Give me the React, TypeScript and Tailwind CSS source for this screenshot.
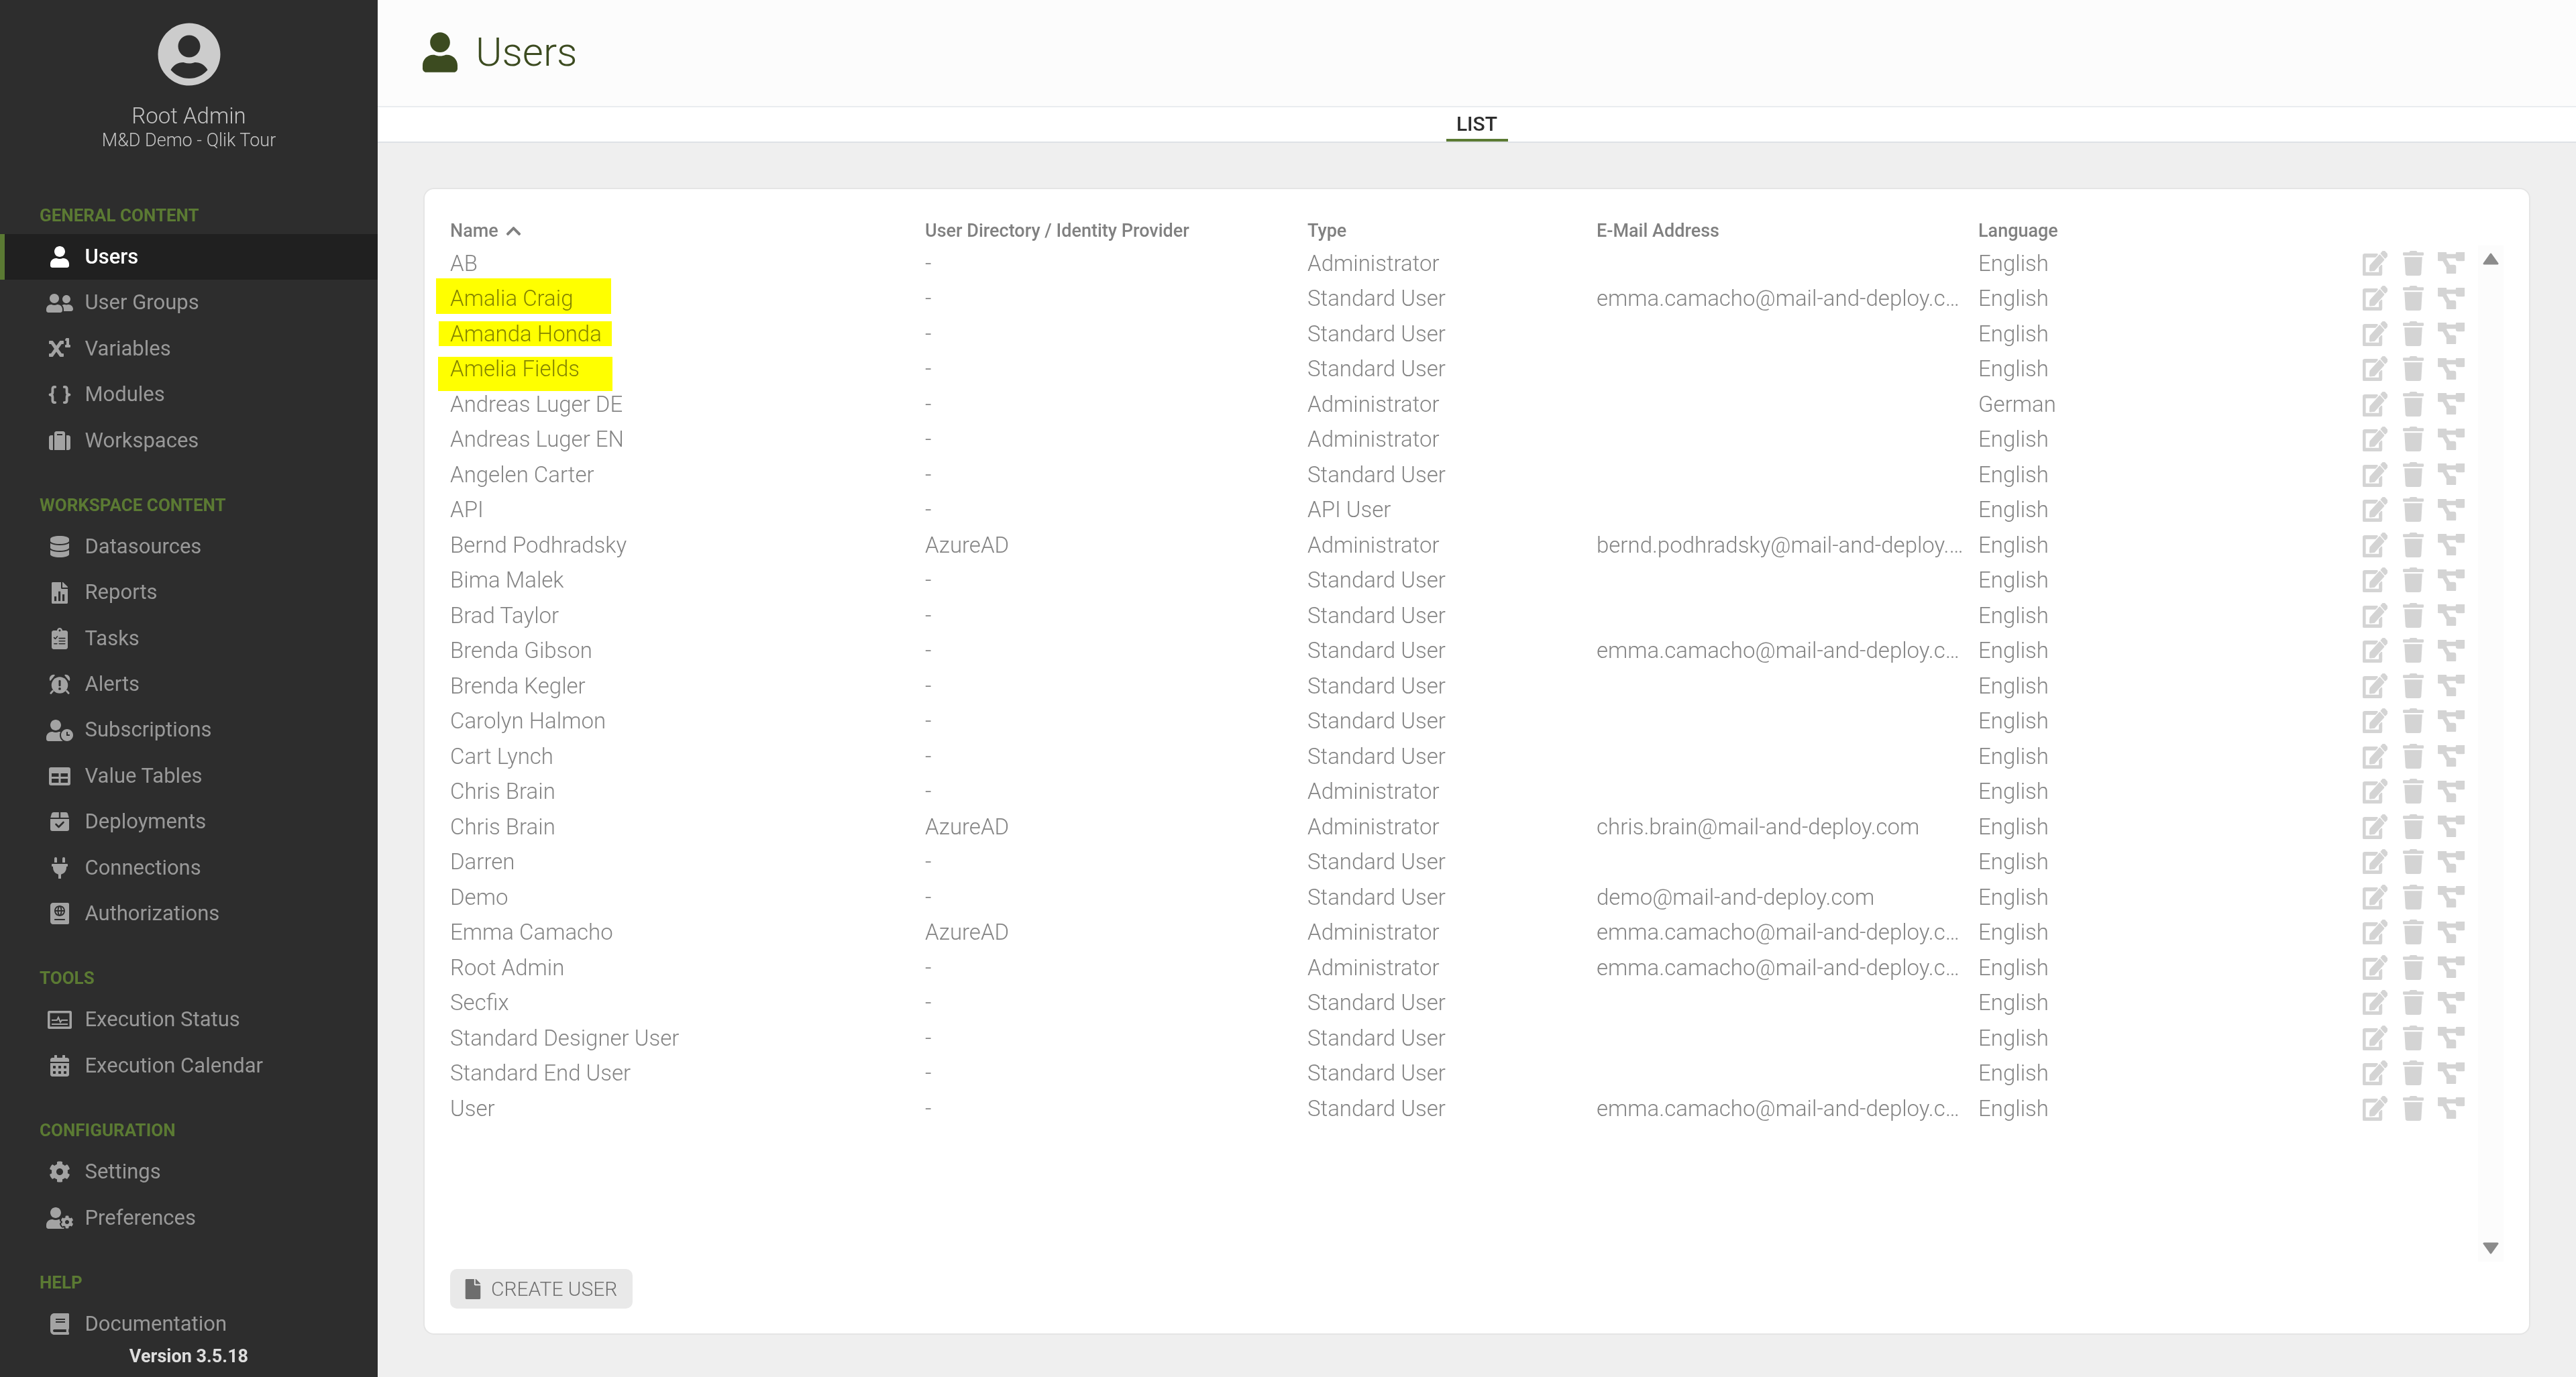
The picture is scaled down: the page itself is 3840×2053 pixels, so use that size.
import type { ReactNode } from "react";
import {
	FaBook,
	FaCalendarAlt,
	FaChevronUp,
	FaCog,
	FaDatabase,
	FaEdit,
	FaFile,
	FaPassport,
	FaPlug,
	FaProjectDiagram,
	FaSuitcase,
	FaSuperscript,
	FaTrash,
	FaUser,
	FaUserCircle,
	FaUserClock,
	FaUserCog,
	FaUserFriends
} from "react-icons/fa";

const BG = "#2d2d2d";

const BracesIcon = () => (
	<svg viewBox="0 0 36 28" className="h-[27px] w-[36px]" fill="none" stroke="currentColor" strokeWidth="4" strokeLinecap="round" strokeLinejoin="round">
		<path d="M11 2H10Q7 2 7 5V10Q7 14 3 14Q7 14 7 18V23Q7 26 10 26H11" />
		<path d="M25 2H26Q29 2 29 5V10Q29 14 33 14Q29 14 29 18V23Q29 26 26 26H25" />
	</svg>
);

const ReportIcon = () => (
	<svg viewBox="0 0 384 512" className="h-[32px] w-[24px]" fill="currentColor">
		<path d="M224 136V0H24C10.7 0 0 10.7 0 24v464c0 13.3 10.7 24 24 24h336c13.3 0 24-10.7 24-24V160H248c-13.2 0-24-10.8-24-24zm160-14.1v6.1H256V0h6.1c6.4 0 12.5 2.5 17 7l97.9 98c4.5 4.5 7 10.6 7 16.9z" />
		<rect x="64" y="340" width="50" height="110" fill={BG} />
		<rect x="160" y="220" width="50" height="230" fill={BG} />
		<rect x="256" y="290" width="50" height="160" fill={BG} />
	</svg>
);

const TasksIcon = () => (
	<svg viewBox="0 0 384 512" className="h-[32px] w-[24px]" fill="currentColor">
		<path d="M336 64h-80c0-35.3-28.7-64-64-64s-64 28.7-64 64H48C21.5 64 0 85.5 0 112v352c0 26.5 21.5 48 48 48h288c26.5 0 48-21.5 48-48V112c0-26.5-21.5-48-48-48zM192 40c13.3 0 24 10.7 24 24s-10.7 24-24 24-24-10.7-24-24 10.7-24 24-24z" />
		<g fill="none" stroke={BG} strokeWidth="26" strokeLinecap="round" strokeLinejoin="round">
			<path d="M58 235l28 28 48-56" />
			<path d="M62 380h64" />
			<path d="M180 250h136" />
			<path d="M180 380h136" />
			<path d="M180 315h136" />
		</g>
	</svg>
);

const AlarmIcon = () => (
	<svg viewBox="0 0 512 512" className="h-[32px] w-[32px]" fill="currentColor">
		<circle cx="256" cy="280" r="196" />
		<path d="M20 170C-8 110 40 20 130 30c12 2 14 12 6 20L42 168c-8 8-18 8-22 2zM492 170c28-60-20-150-110-140-12 2-14 12-6 20l94 118c8 8 18 8 22 2z" />
		<path d="M90 420l-46 52M422 420l46 52" stroke="currentColor" strokeWidth="44" strokeLinecap="round" />
		<rect x="232" y="158" width="48" height="150" rx="20" fill={BG} />
		<circle cx="256" cy="366" r="30" fill={BG} />
	</svg>
);

const TableIcon = () => (
	<svg viewBox="0 0 32 27" className="h-[27px] w-[32px]" fill="currentColor">
		<rect width="32" height="27" rx="3" />
		<rect x="4" y="9" width="10.5" height="5" fill={BG} />
		<rect x="17.5" y="9" width="10.5" height="5" fill={BG} />
		<rect x="4" y="17" width="10.5" height="6" fill={BG} />
		<rect x="17.5" y="17" width="10.5" height="6" fill={BG} />
	</svg>
);

const DeployIcon = () => (
	<svg viewBox="0 0 28 28" className="h-[28px] w-[28px]" fill="currentColor">
		<path d="M5 0H12.8V8H0.3L2 2Q2.6 0 5 0Z" />
		<path d="M15.2 0H23Q25.4 0 26 2L27.7 8H15.2Z" />
		<path d="M0 10H28V25Q28 28 25 28H3Q0 28 0 25Z" />
		<path d="M8.5 18l4 4 7-7" fill="none" stroke={BG} strokeWidth="2.6" strokeLinecap="round" strokeLinejoin="round" />
	</svg>
);

const StatusIcon = () => (
	<svg viewBox="0 0 36 27" className="h-[27px] w-[36px]" fill="currentColor">
		<rect width="36" height="27" rx="2.5" />
		<rect x="3.5" y="3.5" width="29" height="20" fill={BG} />
		<path d="M6 14h8l2-4 3 7 2-3h9" fill="none" stroke="currentColor" strokeWidth="2" />
		<rect x="6" y="19" width="24" height="2" />
	</svg>
);

const Triangle = ({ down }: { down?: boolean }) => (
	<svg viewBox="0 0 24 18" className={`h-[18px] w-[24px] ${down ? "rotate-180" : ""}`} fill="#8c8c8c" stroke="#8c8c8c" strokeWidth="3" strokeLinejoin="round">
		<path d="M12 2L22 16H2Z" />
	</svg>
);

type NavItem = { label: string; icon: ReactNode; active?: boolean };

const sections: { title: string; items: NavItem[] }[] = [
	{
		title: "GENERAL CONTENT",
		items: [
			{ label: "Users", icon: <FaUser className="h-[32px] w-[28px]" />, active: true },
			{ label: "User Groups", icon: <FaUserFriends className="h-[32px] w-[40px]" /> },
			{ label: "Variables", icon: <FaSuperscript className="h-[32px] w-[32px]" /> },
			{ label: "Modules", icon: <BracesIcon /> },
			{ label: "Workspaces", icon: <FaSuitcase className="h-[32px] w-[32px]" /> }
		]
	},
	{
		title: "WORKSPACE CONTENT",
		items: [
			{ label: "Datasources", icon: <FaDatabase className="h-[32px] w-[28px]" /> },
			{ label: "Reports", icon: <ReportIcon /> },
			{ label: "Tasks", icon: <TasksIcon /> },
			{ label: "Alerts", icon: <AlarmIcon /> },
			{ label: "Subscriptions", icon: <FaUserClock className="h-[32px] w-[40px]" /> },
			{ label: "Value Tables", icon: <TableIcon /> },
			{ label: "Deployments", icon: <DeployIcon /> },
			{ label: "Connections", icon: <FaPlug className="h-[32px] w-[24px]" /> },
			{ label: "Authorizations", icon: <FaPassport className="h-[32px] w-[28px]" /> }
		]
	},
	{
		title: "TOOLS",
		items: [
			{ label: "Execution Status", icon: <StatusIcon /> },
			{ label: "Execution Calendar", icon: <FaCalendarAlt className="h-[32px] w-[28px]" /> }
		]
	},
	{
		title: "CONFIGURATION",
		items: [
			{ label: "Settings", icon: <FaCog className="h-[32px] w-[32px]" /> },
			{ label: "Preferences", icon: <FaUserCog className="h-[32px] w-[40px]" /> }
		]
	},
	{
		title: "HELP",
		items: [{ label: "Documentation", icon: <FaBook className="h-[32px] w-[28px]" /> }]
	}
];

const EMMA = "emma.camacho@mail-and-deploy.com";

const users = [
	["AB", "-", "Administrator", "", "English"],
	["Amalia Craig", "-", "Standard User", EMMA, "English"],
	["Amanda Honda", "-", "Standard User", "", "English"],
	["Amelia Fields", "-", "Standard User", "", "English"],
	["Andreas Luger DE", "-", "Administrator", "", "German"],
	["Andreas Luger EN", "-", "Administrator", "", "English"],
	["Angelen Carter", "-", "Standard User", "", "English"],
	["API", "-", "API User", "", "English"],
	["Bernd Podhradsky", "AzureAD", "Administrator", "bernd.podhradsky@mail-and-deploy.com", "English"],
	["Bima Malek", "-", "Standard User", "", "English"],
	["Brad Taylor", "-", "Standard User", "", "English"],
	["Brenda Gibson", "-", "Standard User", EMMA, "English"],
	["Brenda Kegler", "-", "Standard User", "", "English"],
	["Carolyn Halmon", "-", "Standard User", "", "English"],
	["Cart Lynch", "-", "Standard User", "", "English"],
	["Chris Brain", "-", "Administrator", "", "English"],
	["Chris Brain", "AzureAD", "Administrator", "chris.brain@mail-and-deploy.com", "English"],
	["Darren", "-", "Standard User", "", "English"],
	["Demo", "-", "Standard User", "demo@mail-and-deploy.com", "English"],
	["Emma Camacho", "AzureAD", "Administrator", EMMA, "English"],
	["Root Admin", "-", "Administrator", EMMA, "English"],
	["Secfix", "-", "Standard User", "", "English"],
	["Standard Designer User", "-", "Standard User", "", "English"],
	["Standard End User", "-", "Standard User", "", "English"],
	["User", "-", "Standard User", EMMA, "English"]
];

const gridCols = "grid grid-cols-[708px_570px_431px_569px_1fr] items-center";

export default function App() {
	return (
		<div className="relative flex h-[2053px] w-[3840px] overflow-hidden bg-[#efefef] font-['Roboto',sans-serif]">
			<aside className="flex w-[563px] shrink-0 flex-col bg-[#2d2d2d] pt-[33px]">
				<div className="flex flex-col items-center">
					<FaUserCircle className="h-[96px] w-[96px] text-[#cccccc]" />
					<div className="mt-[24px] text-[33px] leading-[40px] font-light text-[#c4c4c4]">Root Admin</div>
					<div className="text-[27px] leading-[32px] font-light text-[#c4c4c4]">M&amp;D Demo - Qlik Tour</div>
				</div>
				<nav className="mt-[79px]">
					{sections.map((section) => (
						<div className="mb-[45px] last:mb-0" key={section.title}>
							<div className="mb-[11px] h-[34px] pl-[59px] text-[26px] leading-[34px] font-bold text-[#5b7a33]">{section.title}</div>
							{section.items.map((item) => (
								<div
									className={`flex h-[68.4px] items-center ${
										item.active
											? "border-l-[7px] border-[#5b7a33] bg-[#202020] pl-[62px] font-medium text-white"
											: "pl-[69px] text-[#999999]"
									}`}
									key={item.label}
								>
									<span className={`flex w-[40px] justify-center ${item.active ? "text-white" : "text-[#a3a3a3]"}`}>{item.icon}</span>
									<span className="ml-[17.5px] text-[31px]">{item.label}</span>
								</div>
							))}
						</div>
					))}
				</nav>
				<div className="text-center text-[27px] leading-[28px] font-bold text-[#dddddd]">Version 3.5.18</div>
			</aside>

			<main className="flex min-w-0 flex-1 flex-col">
				<header className="flex h-[160px] items-center border-b-2 border-[#e9ecef] bg-[#fcfcfc] pb-[3px] pl-[67px] text-[#3c4b20]">
					<FaUser className="h-[60px] w-[52px]" />
					<h1 className="ml-[27px] text-[60px] leading-none font-light">Users</h1>
				</header>
				<div className="flex h-[53px] justify-center border-b-2 border-[#dee2e6] bg-white">
					<div className="flex h-[51px] w-[92px] items-center justify-center border-b-4 border-[#5b7a33] pt-[2px] text-[30px] font-medium text-[#2d2d2d]">LIST</div>
				</div>
				<div className="flex flex-1 flex-col pt-[67px] pr-[68px] pb-[63px] pl-[68px]">
					<div className="flex flex-1 flex-col rounded-[16px] border-2 border-[#e5e5e5] bg-white pr-[38px] pl-[38px]">
						<div className={`${gridCols} mt-[42px] mb-[8px] h-[34px] text-[27px] font-medium text-[#808080]`}>
							<div className="flex items-center gap-[10px]">
								Name <FaChevronUp className="h-[25px] w-[25px]" />
							</div>
							<div>User Directory / Identity Provider</div>
							<div>Type</div>
							<div>E-Mail Address</div>
							<div>Language</div>
						</div>
						<div className="flex h-[1515px]">
							<div className="min-w-0 flex-1">
								{users.map((user, i) => (
									<div className={`${gridCols} h-[52.5px] text-[33px] font-light text-[#848484]`} key={i}>
										<div>{user[0]}</div>
										<div>{user[1]}</div>
										<div>{user[2]}</div>
										<div className="truncate pr-[20px]">{user[3]}</div>
										<div className="flex items-center justify-between pr-[20px]">
											{user[4]}
											<span className="flex items-center text-[#d4d4d4]">
												<FaEdit className="h-[37px] w-[37px]" preserveAspectRatio="none" strokeWidth={14} />
												<FaTrash className="ml-[23px] h-[37px] w-[31px]" preserveAspectRatio="none" />
												<FaProjectDiagram className="ml-[21px] h-[32px] w-[40px]" strokeWidth={40} />
											</span>
										</div>
									</div>
								))}
							</div>
							<div className="flex w-[38px] shrink-0 flex-col items-center justify-between bg-[#fcfcfc] pt-[11px] pb-[11px]">
								<Triangle />
								<Triangle down />
							</div>
						</div>
						<button className="mt-[11px] flex h-[59px] w-[272px] items-center rounded-[10px] bg-[#e9e9e9] pl-[22px] text-[30px] font-light text-[#707070]">
							<FaFile className="h-[30px] w-[24px] text-[#6e6e6e]" />
							<span className="ml-[15px]">CREATE USER</span>
						</button>
					</div>
				</div>
			</main>

			<div className="absolute top-[415px] left-[650px] h-[53px] w-[261px] bg-[#ffff00] mix-blend-multiply" />
			<div className="absolute top-[479px] left-[654px] h-[37px] w-[258px] bg-[#ffff00] mix-blend-multiply" />
			<div className="absolute top-[532px] left-[653px] h-[51px] w-[260px] bg-[#ffff00] mix-blend-multiply" />
		</div>
	);
}
